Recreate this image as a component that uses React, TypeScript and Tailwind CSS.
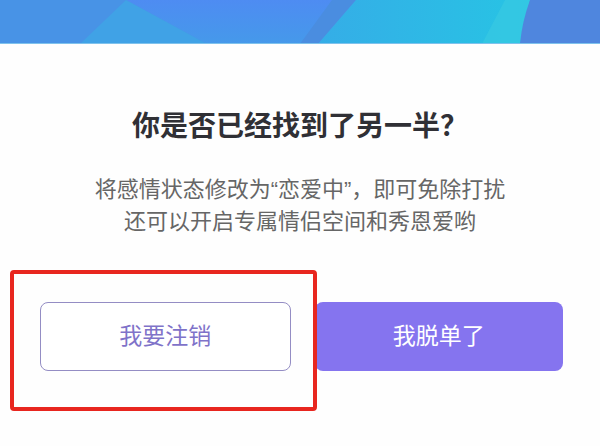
import * as React from 'react'

const font = '"Liberation Sans", "Noto Sans CJK SC", sans-serif'

function Banner() {
  return (
    <div className="h-[44px] w-full overflow-hidden border-b border-[#7fc2ec]">
      <svg width="600" height="44" viewBox="0 0 600 44" className="block">
        <defs>
          <linearGradient id="mid" x1="0" y1="0" x2="0" y2="1">
            <stop offset="0" stopColor="#4e8cf2" />
            <stop offset="1" stopColor="#4599ea" />
          </linearGradient>
          <linearGradient id="cyan" x1="0" y1="0" x2="1" y2="0">
            <stop offset="0" stopColor="#35ade7" />
            <stop offset="1" stopColor="#27c4e4" />
          </linearGradient>
        </defs>
        <rect width="600" height="44" fill="#4893e6" />
        <polygon points="126,0 356,0 318,44 207,44" fill="url(#mid)" />
        <polygon points="126,0 207,44 80,44" fill="#40a2e6" />
        <polygon points="332,0 356,0 318,44 300,44" fill="#4a8de0" />
        <polygon points="356,0 530,0 520,44 318,44" fill="url(#cyan)" />
        <polygon points="505,0 530,0 520,44 482,44" fill="#38c9e2" opacity="0.7" />
        <path d="M530,0 Q522,22 520,44 L600,44 L600,0 Z" fill="#4f86de" />
      </svg>
    </div>
  )
}

export default function App() {
  return (
    <div className="relative w-[600px] h-[446px] overflow-hidden bg-[#fefefe]" style={{ fontFamily: font }}>
      <Banner />

      <div className="flex flex-col items-center">
        <h1 className="mt-[63px] text-[28px] leading-[40px] font-bold text-[#303035]">
          你是否已经找到了另一半？
        </h1>
        <p className="mt-[27px] text-center text-[22px] leading-[32px] text-[#666666]">
          将感情状态修改为“恋爱中”，即可免除打扰
          <br />
          还可以开启专属情侣空间和秀恩爱哟
        </p>
      </div>

      <div className="mt-[64px] flex gap-[24px] pl-[40px] pr-[37px]">
        <button
          type="button"
          className="flex h-[69px] flex-1 items-center justify-center rounded-[8px] border-[1.5px] border-[#948dc4] bg-white text-[23px] text-[#7f73c9]"
        >
          我要注销
        </button>
        <button
          type="button"
          className="flex h-[69px] flex-1 items-center justify-center rounded-[8px] bg-[#8574ef] text-[23px] text-white"
        >
          我脱单了
        </button>
      </div>

      {/* annotation frame */}
      <div className="pointer-events-none absolute left-[10px] top-[270px] h-[141px] w-[307px] rounded-[4px] border-4 border-[#e8261f]" />
    </div>
  )
}
